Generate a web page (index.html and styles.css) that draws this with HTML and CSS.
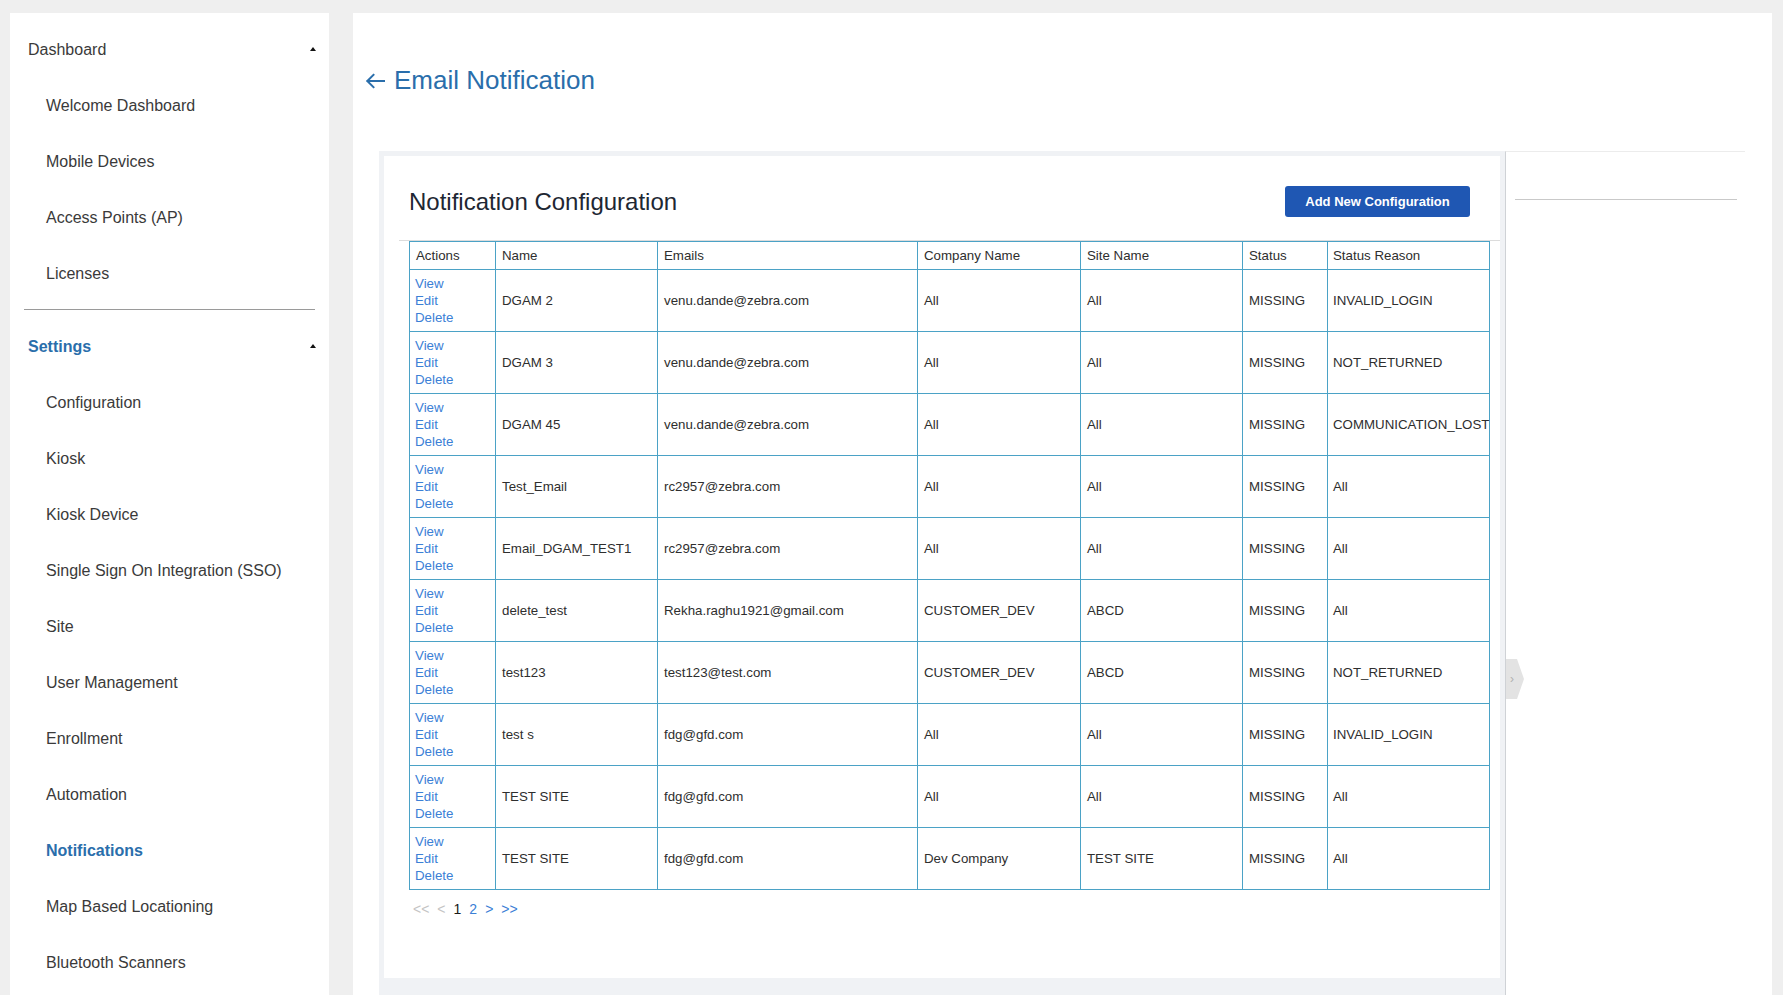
FILE: index.html
```html
<!DOCTYPE html>
<html lang="en">
<head>
<meta charset="utf-8">
<title>Email Notification</title>
<link rel="stylesheet" href="styles.css">
</head>
<body>
<aside class="sidebar">
  <div class="nav-head"><span>Dashboard</span><span class="caret"></span></div>
  <div class="nav-item">Welcome Dashboard</div>
  <div class="nav-item">Mobile Devices</div>
  <div class="nav-item">Access Points (AP)</div>
  <div class="nav-item">Licenses</div>
  <div class="nav-divider"></div>
  <div class="nav-head active"><span>Settings</span><span class="caret"></span></div>
  <div class="nav-item">Configuration</div>
  <div class="nav-item">Kiosk</div>
  <div class="nav-item">Kiosk Device</div>
  <div class="nav-item">Single Sign On Integration (SSO)</div>
  <div class="nav-item">Site</div>
  <div class="nav-item">User Management</div>
  <div class="nav-item">Enrollment</div>
  <div class="nav-item">Automation</div>
  <div class="nav-item active">Notifications</div>
  <div class="nav-item">Map Based Locationing</div>
  <div class="nav-item">Bluetooth Scanners</div>
</aside>
<main class="main">
  <h1 class="page-title">
    <svg class="back" width="20" height="16" viewBox="0 0 20 16"><path d="M19 8H2.5M8.5 1.8L2.3 8l6.2 6.2" fill="none" stroke="currentColor" stroke-width="2" stroke-linecap="square"/></svg>
    <span>Email Notification</span>
  </h1>
  <div class="content-row">
    <section class="card">
      <div class="card-inner">
        <div class="card-head">
          <h2 class="card-title">Notification Configuration</h2>
          <button class="btn-primary">Add New Configuration</button>
        </div>
        <div class="table-area">
          <table class="grid">
            <colgroup>
              <col class="c-act"><col class="c-name"><col class="c-mail"><col class="c-comp"><col class="c-site"><col class="c-stat"><col class="c-reason">
            </colgroup>
            <thead>
              <tr><th>Actions</th><th>Name</th><th>Emails</th><th>Company Name</th><th>Site Name</th><th>Status</th><th>Status Reason</th></tr>
            </thead>
            <tbody>
              <tr><td class="acts"><a>View</a><a>Edit</a><a>Delete</a></td><td>DGAM 2</td><td>venu.dande@zebra.com</td><td>All</td><td>All</td><td>MISSING</td><td>INVALID_LOGIN</td></tr>
              <tr><td class="acts"><a>View</a><a>Edit</a><a>Delete</a></td><td>DGAM 3</td><td>venu.dande@zebra.com</td><td>All</td><td>All</td><td>MISSING</td><td>NOT_RETURNED</td></tr>
              <tr><td class="acts"><a>View</a><a>Edit</a><a>Delete</a></td><td>DGAM 45</td><td>venu.dande@zebra.com</td><td>All</td><td>All</td><td>MISSING</td><td>COMMUNICATION_LOST</td></tr>
              <tr><td class="acts"><a>View</a><a>Edit</a><a>Delete</a></td><td>Test_Email</td><td>rc2957@zebra.com</td><td>All</td><td>All</td><td>MISSING</td><td>All</td></tr>
              <tr><td class="acts"><a>View</a><a>Edit</a><a>Delete</a></td><td>Email_DGAM_TEST1</td><td>rc2957@zebra.com</td><td>All</td><td>All</td><td>MISSING</td><td>All</td></tr>
              <tr><td class="acts"><a>View</a><a>Edit</a><a>Delete</a></td><td>delete_test</td><td>Rekha.raghu1921@gmail.com</td><td>CUSTOMER_DEV</td><td>ABCD</td><td>MISSING</td><td>All</td></tr>
              <tr><td class="acts"><a>View</a><a>Edit</a><a>Delete</a></td><td>test123</td><td>test123@test.com</td><td>CUSTOMER_DEV</td><td>ABCD</td><td>MISSING</td><td>NOT_RETURNED</td></tr>
              <tr><td class="acts"><a>View</a><a>Edit</a><a>Delete</a></td><td>test s</td><td>fdg@gfd.com</td><td>All</td><td>All</td><td>MISSING</td><td>INVALID_LOGIN</td></tr>
              <tr><td class="acts"><a>View</a><a>Edit</a><a>Delete</a></td><td>TEST SITE</td><td>fdg@gfd.com</td><td>All</td><td>All</td><td>MISSING</td><td>All</td></tr>
              <tr><td class="acts"><a>View</a><a>Edit</a><a>Delete</a></td><td>TEST SITE</td><td>fdg@gfd.com</td><td>Dev Company</td><td>TEST SITE</td><td>MISSING</td><td>All</td></tr>
            </tbody>
          </table>
          <div class="pager">
            <span class="off">&lt;&lt;</span><span class="off">&lt;</span><span class="cur">1</span><span class="lnk">2</span><span class="lnk">&gt;</span><span class="lnk">&gt;&gt;</span>
          </div>
        </div>
      </div>
    </section>
    <aside class="side-panel">
      <div class="side-line"></div>
      <div class="handle"><span>&#8250;</span></div>
    </aside>
  </div>
</main>
</body>
</html>
```

FILE: styles.css
```css
* { box-sizing: border-box; }
html, body { height: 100%; overflow: hidden; }
body {
  margin: 0;
  background: #efefef;
  font-family: "Liberation Sans", Arial, sans-serif;
  color: #333;
  display: flex;
  gap: 24px;
  padding: 13px 11px 0 10px;
}

/* Sidebar */
.sidebar {
  width: 319px;
  flex: 0 0 319px;
  background: #fff;
  padding-top: 9px;
  font-size: 16px;
  color: #3a3a3a;
}
.nav-head {
  height: 56px;
  display: flex;
  align-items: center;
  justify-content: space-between;
  padding: 0 13px 0 18px;
}
.nav-item {
  height: 56px;
  display: flex;
  align-items: center;
  padding-left: 36px;
}
.active { color: #2a6eab; font-weight: 700; }
.caret {
  width: 0; height: 0;
  border-left: 3.5px solid transparent;
  border-right: 3.5px solid transparent;
  border-bottom: 4px solid #111;
  margin-top: -2px;
}
.nav-divider {
  margin: 7px 14px 9px;
  border-top: 1px solid #9a9a9a;
}

/* Main */
.main {
  flex: 1;
  background: #fff;
  padding-top: 52px;
  min-width: 0;
}
.page-title {
  margin: 0 0 0 12px;
  height: 30px;
  display: flex;
  align-items: center;
  gap: 9px;
  font-size: 26px;
  line-height: 30px;
  font-weight: 400;
  color: #2a6eab;
}
.back { display: block; margin-top: 1px; }

.content-row {
  display: flex;
  margin: 56px 27px 0 26px;
}
.card {
  flex: 1;
  background: #f0f2f5;
  padding: 5px 5px 60px 5px;
}
.card-inner {
  background: #fff;
  padding: 30px 0 59px 0;
}
.card-head {
  display: flex;
  align-items: center;
  justify-content: space-between;
  padding: 0 30px 0 25px;
  height: 31px;
}
.card-title {
  margin: 0;
  font-size: 24px;
  font-weight: 400;
  color: #1e2733;
  line-height: 28px;
}
.btn-primary {
  height: 31px;
  width: 185px;
  border: 0;
  border-radius: 3px;
  background: #1f57b3;
  color: #fff;
  font-family: inherit;
  font-size: 13px;
  font-weight: 700;
  padding: 0;
}
.table-area {
  margin: 23px 0 0 15px;
  border-top: 1px solid #dcdcdc;
  padding-left: 10px;
}
.grid {
  border-collapse: collapse;
  table-layout: fixed;
  width: 1080px;
  font-size: 13.3px;
  color: #2e2e2e;
}
.c-act { width: 86px; }
.c-name { width: 162px; }
.c-mail { width: 260px; }
.c-comp { width: 163px; }
.c-site { width: 162px; }
.c-stat { width: 85px; }
.c-reason { width: 162px; }
.grid th, .grid td {
  border: 1px solid #4ba2c6;
  padding: 0 6px;
  text-align: left;
  font-weight: 400;
  white-space: nowrap;
  overflow: hidden;
  vertical-align: middle;
}
.grid thead tr { height: 28px; }
.grid tbody tr { height: 62px; }
.grid td.acts { padding-left: 5px; }
.acts a {
  display: block;
  line-height: 17px;
  color: #3b80d6;
}
.grid th:last-child, .grid td:last-child { padding: 0 0 0 5px; overflow: visible; }

.pager {
  margin-top: 9px;
  padding-left: 4px;
  font-size: 14px;
  line-height: 20px;
  display: flex;
  gap: 8px;
}
.off { color: #c4c4c4; }
.cur { color: #1a1a1a; }
.lnk { color: #3b80d6; }

/* right panel */
.side-panel {
  position: relative;
  flex: 0 0 240px;
  border-left: 1px solid #cfd2d6;
  border-top: 1px solid #ececec;
}
.side-line {
  margin: 47px 8px 0 9px;
  border-top: 1px solid #c9c9c9;
}
.handle {
  position: absolute;
  left: 0;
  top: 507px;
  width: 18px;
  height: 40px;
  background: #e3e3e3;
  clip-path: polygon(0 0, 11px 0, 18px 50%, 11px 100%, 0 100%);
  display: flex;
  align-items: center;
  padding-left: 4px;
  color: #b0b0b0;
  font-size: 12px;
}
```
